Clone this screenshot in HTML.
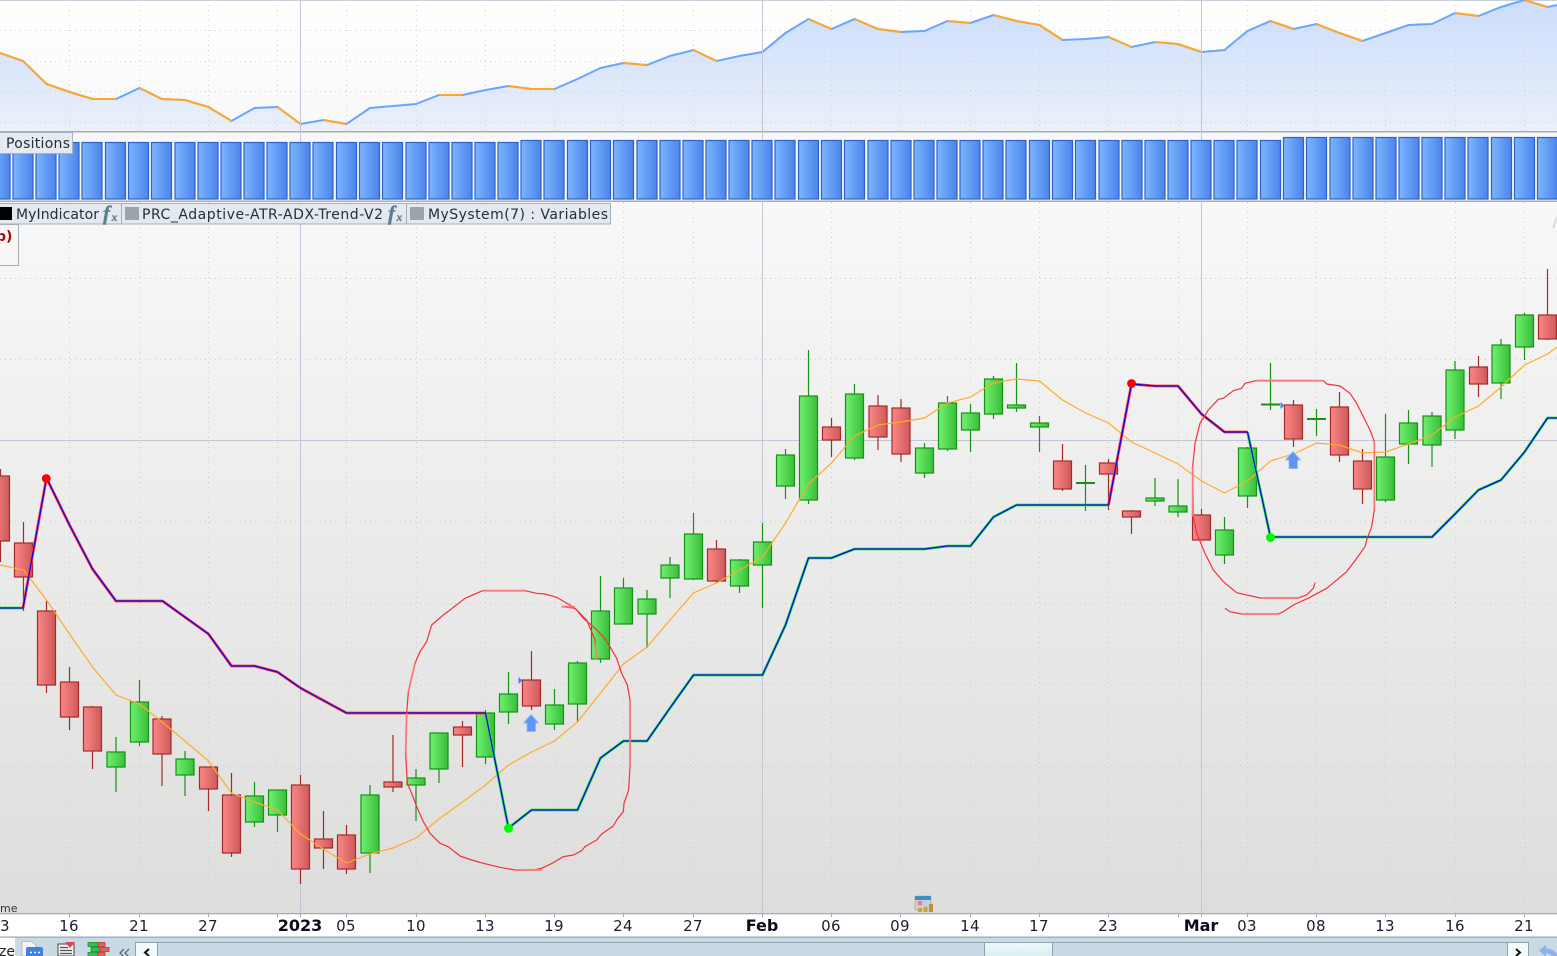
<!DOCTYPE html>
<html><head><meta charset="utf-8"><title>Chart</title>
<style>
html,body{margin:0;padding:0;background:#fff;width:1557px;height:956px;overflow:hidden}
svg{display:block;position:absolute;left:0;top:0}
text{font-family:"DejaVu Sans","Liberation Sans",sans-serif;fill:#1a1a2a}
.ax{font-size:15px;text-anchor:middle;letter-spacing:.3px;fill:#1c1c30}
.axb{font-size:16px;font-weight:bold;text-anchor:middle;fill:#0c0c18}
.lg{font-size:14px;fill:#22303a}
.fx{font-family:"Liberation Serif",serif;font-style:italic;font-weight:bold;fill:#5e7e8c}
.bars rect{width:20px;stroke:#2d62cc;stroke-width:1.2;fill:url(#gb)}
.b1 rect{y:142.5px;height:56.5px}
.b2 rect{y:140.5px;height:58.5px}
.b3 rect{y:137.5px;height:61.5px}
</style></head><body>
<svg width="1557" height="956" viewBox="0 0 1557 956" xmlns="http://www.w3.org/2000/svg">
<defs>
<linearGradient id="gt" x1="0" y1="0" x2="0" y2="1"><stop offset="0" stop-color="#fff"/><stop offset="1" stop-color="#f8f8f8"/></linearGradient>
<linearGradient id="ga" gradientUnits="userSpaceOnUse" x1="0" y1="0" x2="0" y2="131"><stop offset="0" stop-color="#cbddfc"/><stop offset="1" stop-color="#ebf0fa"/></linearGradient>
<linearGradient id="gm" x1="0" y1="0" x2="0" y2="1"><stop offset="0" stop-color="#f8f8f8"/><stop offset="1" stop-color="#dddddc"/></linearGradient>
<linearGradient id="gb" x1="0" y1="0" x2="1" y2="0"><stop offset="0" stop-color="#7db5ff"/><stop offset="1" stop-color="#4b84ea"/></linearGradient>
<linearGradient id="gg" x1="0" y1="0" x2="1" y2="0"><stop offset="0" stop-color="#70f070"/><stop offset="1" stop-color="#3abf3a"/></linearGradient>
<linearGradient id="gr" x1="0" y1="0" x2="1" y2="0"><stop offset="0" stop-color="#fc8686"/><stop offset="1" stop-color="#cd5a5a"/></linearGradient>
<linearGradient id="gth" x1="0" y1="0" x2="0" y2="1"><stop offset="0" stop-color="#eef9fb"/><stop offset="1" stop-color="#d8edf1"/></linearGradient>
</defs>

<!-- top panel -->
<rect x="0" y="0" width="1557" height="131" fill="url(#gt)"/>
<rect x="0" y="0" width="1557" height="1" fill="#c8d0dc"/>
<path d="M0 53L23 61 46.5 84 69.5 92 92.5 99 116 99 139.5 88 162 99 185 100 208.5 107 231.5 121 254.5 108 277.5 107 300.5 124 323.5 120 346.5 124 370 108 393 106 416 104 439 95 462.5 95 485.5 90 508.5 86 531.5 89 554.5 89 577.5 79 600.5 68 623.5 63 647 65 670 56 693.5 50 716.5 61 739.5 56 762.5 52 785.5 33 808.5 19 831.5 29 854.5 19 878 29 901 32 924.5 31 947.5 21 970.5 23 993.5 15 1016.5 21 1039.5 25 1062.5 40 1085.5 39 1108.5 37 1131.5 47 1155 42 1178 44 1201.5 52 1224.5 50 1247.5 31 1270.5 21 1293.5 29 1316.5 24 1339.5 33 1362.5 41 1385.5 33 1408.5 25 1432 24 1455 13 1478.5 16 1501 7 1524.5 0 1547.5 7 1557 5V131H0Z" fill="url(#ga)"/>
<g stroke="#d2d4d9" stroke-width="1" stroke-dasharray="1 4" fill="none">
<path d="M0 30.5H1557M0 61.5H1557M0 91.5H1557M0 122.5H1557"/>
<path d="M69.5 0V131M139.5 0V131M208.5 0V131M277.5 0V131M346.5 0V131M416.5 0V131M485.5 0V131M554.5 0V131M623.5 0V131M693.5 0V131M831.5 0V131M900.5 0V131M970.5 0V131M1039.5 0V131M1108.5 0V131M1178.5 0V131M1247.5 0V131M1316.5 0V131M1385.5 0V131M1455.5 0V131M1524.5 0V131"/>
</g>
<path d="M0 53L23 61 46.5 84 69.5 92 92.5 99 116 99 139.5 88 162 99 185 100 208.5 107 231.5 121 254.5 108 277.5 107 300.5 124 323.5 120 346.5 124 370 108 393 106 416 104 439 95 462.5 95 485.5 90 508.5 86 531.5 89 554.5 89 577.5 79 600.5 68 623.5 63 647 65 670 56 693.5 50 716.5 61 739.5 56 762.5 52 785.5 33 808.5 19 831.5 29 854.5 19 878 29 901 32 924.5 31 947.5 21 970.5 23 993.5 15 1016.5 21 1039.5 25 1062.5 40 1085.5 39 1108.5 37 1131.5 47 1155 42 1178 44 1201.5 52 1224.5 50 1247.5 31 1270.5 21 1293.5 29 1316.5 24 1339.5 33 1362.5 41 1385.5 33 1408.5 25 1432 24 1455 13 1478.5 16 1501 7 1524.5 0 1547.5 7 1557 5" fill="none" stroke="#69a5ff" stroke-width="2"/>
<path d="M0 53L23 61 46.5 84 69.5 92 92.5 99 116 99M139.5 88L162 99 185 100 208.5 107 231.5 121M277.5 107L300.5 124M323.5 120L346.5 124M439 95L462.5 95M508.5 86L531.5 89 554.5 89M623.5 63L647 65M693.5 50L716.5 61M808.5 19L831.5 29M854.5 19L878 29 901 32M947.5 21L970.5 23M993.5 15L1016.5 21 1039.5 25 1062.5 40M1108.5 37L1131.5 47M1155 42L1178 44 1201.5 52M1270.5 21L1293.5 29M1316.5 24L1339.5 33 1362.5 41M1455 13L1478.5 16M1524.5 0L1547.5 7" fill="none" stroke="#ffa726" stroke-width="2"/>
<rect x="0" y="131" width="1557" height="1.5" fill="#a6adb5"/>

<!-- main panel + positions panel backgrounds -->
<rect x="0" y="132.5" width="1557" height="68" fill="#f8f8f8"/>
<rect x="0" y="200.5" width="1557" height="1.5" fill="#a6adb5"/>
<rect x="0" y="202" width="1557" height="711" fill="url(#gm)"/>
<g stroke="#cdcfd4" stroke-width="1" stroke-dasharray="1 4" fill="none">
<path d="M0 278.5H1557M0 359.5H1557M0 521.5H1557M0 603.5H1557M0 684.5H1557M0 765.5H1557M0 847.5H1557"/>
<path d="M69.5 202V913M139.5 202V913M208.5 202V913M277.5 202V913M346.5 202V913M416.5 202V913M485.5 202V913M554.5 202V913M623.5 202V913M693.5 202V913M831.5 202V913M900.5 202V913M970.5 202V913M1039.5 202V913M1108.5 202V913M1178.5 202V913M1247.5 202V913M1316.5 202V913M1385.5 202V913M1455.5 202V913M1524.5 202V913"/>
</g>
<path d="M0 440.5H1557M300.5 0V916M762.5 0V916M1201.5 0V916" stroke="#c2c6d6" stroke-width="1" fill="none"/>
<path d="M1553 228L1557 217" stroke="#dcdcdf" stroke-width="2" fill="none"/>

<!-- position bars -->
<g class="bars b1"><rect x="-10"/><rect x="13"/><rect x="36"/><rect x="59"/><rect x="82"/><rect x="105.5"/><rect x="128.5"/><rect x="151.5"/><rect x="175"/><rect x="198"/><rect x="221"/><rect x="244"/><rect x="267"/><rect x="290"/><rect x="313"/><rect x="336.5"/><rect x="359.5"/><rect x="382.5"/><rect x="406"/><rect x="429"/><rect x="452"/><rect x="475"/><rect x="498"/></g>
<g class="bars b2"><rect x="521"/><rect x="544"/><rect x="567.5"/><rect x="590.5"/><rect x="613.5"/><rect x="637"/><rect x="660"/><rect x="683"/><rect x="706"/><rect x="729"/><rect x="752"/><rect x="775"/><rect x="798.5"/><rect x="821.5"/><rect x="844.5"/><rect x="868"/><rect x="891"/><rect x="914"/><rect x="937"/><rect x="960"/><rect x="983"/><rect x="1006"/><rect x="1029.5"/><rect x="1052.5"/><rect x="1075.5"/><rect x="1099"/><rect x="1122"/><rect x="1145"/><rect x="1168"/><rect x="1191"/><rect x="1214"/><rect x="1237"/><rect x="1260.5"/></g>
<g class="bars b3"><rect x="1283.5"/><rect x="1306.5"/><rect x="1330"/><rect x="1353"/><rect x="1376"/><rect x="1399"/><rect x="1422"/><rect x="1445"/><rect x="1468"/><rect x="1491.5"/><rect x="1514.5"/><rect x="1537.5"/></g>

<!-- red candles -->
<path fill="none" stroke="#a32a2a" stroke-width="1.2" d="M.5 469V562M23.5 522V611M46.5 601V693M69.5 667V730M92.5 706V769M162 716V786M208.5 767V811M231.5 773V857M300.5 775V884M323.5 811V869M346.5 825V874M393 735V792M462.5 721V767M531.5 651V710M716.5 540V583M831.5 418V457M878 395V450M901 399V462M1062.5 444V491M1108.5 459V510M1131.5 510V534M1201.5 509V540M1293.5 400V447M1339.5 392V462M1362.5 449V504M1478.5 356V397M1547.5 269V340"/>
<g fill="url(#gr)" stroke="#a32a2a" stroke-width="1.2">
<rect x="-8.5" y="476" width="18" height="65"/><rect x="14.5" y="543" width="18" height="34"/><rect x="37.5" y="611" width="18" height="74"/><rect x="60.5" y="682" width="18" height="35"/><rect x="83.5" y="707" width="18" height="44"/><rect x="153" y="719" width="18" height="35"/><rect x="199.5" y="767" width="18" height="22"/><rect x="222.5" y="795" width="18" height="58"/><rect x="291.5" y="785" width="18" height="84"/><rect x="314.5" y="839" width="18" height="9"/><rect x="337.5" y="835" width="18" height="34"/><rect x="384" y="782" width="18" height="5"/><rect x="453.5" y="727" width="18" height="8"/><rect x="522.5" y="680" width="18" height="26"/><rect x="707.5" y="549" width="18" height="32"/><rect x="822.5" y="427" width="18" height="13"/><rect x="869" y="406" width="18" height="31"/><rect x="892" y="408" width="18" height="46"/><rect x="1053.5" y="461" width="18" height="28"/><rect x="1099.5" y="463" width="18" height="11"/><rect x="1122.5" y="511" width="18" height="6"/><rect x="1192.5" y="515" width="18" height="25"/><rect x="1284.5" y="405" width="18" height="34"/><rect x="1330.5" y="407" width="18" height="48"/><rect x="1353.5" y="461" width="18" height="28"/><rect x="1469.5" y="367" width="18" height="17"/><rect x="1538.5" y="315" width="18" height="24"/>
</g>
<!-- green candles -->
<path fill="none" stroke="#149214" stroke-width="1.2" d="M116 737V792M139.5 680V746M185 751V796M254.5 782V827M277.5 790V832M370 785V873M416 769V821M439 733V783M485.5 710V764M508.5 672V724M554.5 689V730M577.5 661V722M600.5 576V663M623.5 578V624M647 590V648M670 557V598M693.5 513V580M739.5 559V593M762.5 523V608M785.5 449V499M808.5 350V504M854.5 384V460M924.5 443V478M947.5 396V451M970.5 404V452M993.5 376V419M1016.5 363V412M1039.5 416V452M1085.5 465V511M1155 478V506M1178 479V517M1224.5 517V564M1247.5 447V508M1270.5 363V410M1316.5 409V436M1385.5 414V502M1408.5 410V464M1432 412V467M1455 361V439M1501 339V399M1524.5 313V360"/>
<path fill="none" stroke="#149214" stroke-width="2" d="M1076 483H1095M1261 404.500H1280M1307 419H1326"/>
<g fill="url(#gg)" stroke="#149214" stroke-width="1.2">
<rect x="107" y="752" width="18" height="15"/><rect x="130.500" y="702" width="18" height="40"/><rect x="176" y="759" width="18" height="16"/><rect x="245.500" y="796" width="18" height="26"/><rect x="268.500" y="790" width="18" height="25"/><rect x="361" y="795" width="18" height="58"/><rect x="407" y="778" width="18" height="7"/><rect x="430" y="733" width="18" height="36"/><rect x="476.500" y="713" width="18" height="44"/><rect x="499.500" y="694" width="18" height="18"/><rect x="545.500" y="705" width="18" height="19"/><rect x="568.500" y="663" width="18" height="41"/><rect x="591.500" y="611" width="18" height="48"/><rect x="614.500" y="588" width="18" height="36"/><rect x="638" y="599" width="18" height="15"/><rect x="661" y="565" width="18" height="13"/><rect x="684.500" y="534" width="18" height="45"/><rect x="730.500" y="560" width="18" height="26"/><rect x="753.500" y="542" width="18" height="23"/><rect x="776.500" y="455" width="18" height="31"/><rect x="799.500" y="396" width="18" height="104"/><rect x="845.500" y="394" width="18" height="64"/><rect x="915.500" y="448" width="18" height="25"/><rect x="938.500" y="403" width="18" height="46"/><rect x="961.500" y="413" width="18" height="17"/><rect x="984.500" y="379" width="18" height="35"/><rect x="1007.500" y="405" width="18" height="3"/><rect x="1030.500" y="423" width="18" height="4"/><rect x="1146" y="498" width="18" height="3"/><rect x="1169" y="506" width="18" height="6"/><rect x="1215.500" y="530" width="18" height="25"/><rect x="1238.500" y="448" width="18" height="48"/><rect x="1376.500" y="457" width="18" height="43"/><rect x="1399.500" y="423" width="18" height="21"/><rect x="1423" y="416" width="18" height="29"/><rect x="1446" y="370" width="18" height="60"/><rect x="1492" y="345" width="18" height="38"/><rect x="1515.500" y="315" width="18" height="32"/>
</g>

<!-- moving average -->
<path fill="none" stroke="#ffab2a" stroke-width="1.2" d="M0 565L23.500 570 46.500 600 69.500 634 92.500 667 116 695 139.500 704 162 722 185 741 208.500 761 231.500 793 254.500 802 277.500 810 300.500 834 323.500 849 346.500 863 370 854 393 848 416 838 439 819 462.500 802 485.500 785 508.500 765 531.500 752 554.500 741 577.500 722 600.500 693 623.500 664 647 647 670 620 693.500 593 716.500 583 739.500 570 762.500 557 785.500 523 808.500 484 831.500 463 854.500 436 878 425 901 422 924.500 418 947.500 403 970.500 397 993.500 383 1016.500 379 1039.500 381 1062.500 400 1085.500 413 1108.500 423 1131.500 442 1155 453 1178 464 1201.500 481 1224.500 493 1247.500 481 1270.500 461 1293.500 454 1316.500 443 1339.500 445 1362.500 453 1385.500 452 1408.500 444 1432 435 1455 417 1478.500 406 1501 387 1524.500 365 1547.500 354 1557 347"/>

<!-- trend halos and core -->
<g fill="none" stroke-linejoin="round">
<g stroke="#2ee050" stroke-width="2.800">
<path d="M0 608H23"/>
<path d="M485.500 713L508.500 828 531.500 810 577.500 810 600.500 758 623.500 741 647 741 670 708 693.500 675 762.500 675 785.500 625 808.500 558 831.500 558 854.500 549 924.500 549 947.500 546 970.500 546 993.500 517 1016.500 505 1108.500 505"/>
<path d="M1247.500 432L1270.500 537 1293.500 537 1432 537 1455 514 1478.500 490 1501 480 1524.500 452 1547.500 418 1557 418"/>
</g>
<g stroke="#ff3a4e" stroke-width="2.800">
<path d="M23 608L46.500 478 69.500 525 92.500 569 116 601 162.500 601 208.500 634 231.500 666 254.500 666 277.500 672 300.500 688 346.500 713 485.500 713"/>
<path d="M1108.500 505L1131.500 384 1155 386 1178 386 1201.500 414 1224.500 432 1247.500 432"/>
</g>
<path stroke="#0808d8" stroke-width="1.250" d="M0 608H23L46.500 478 69.500 525 92.500 569 116 601 162.500 601 208.500 634 231.500 666 254.500 666 277.500 672 300.500 688 346.500 713 485.500 713 508.500 828 531.500 810 577.500 810 600.500 758 623.500 741 647 741 670 708 693.500 675 762.500 675 785.500 625 808.500 558 831.500 558 854.500 549 924.500 549 947.500 546 970.500 546 993.500 517 1016.500 505 1108.500 505 1131.500 384 1155 386 1178 386 1201.500 414 1224.500 432 1247.500 432 1270.500 537 1293.500 537 1432 537 1455 514 1478.500 490 1501 480 1524.500 452 1547.500 418 1557 418"/>
</g>
<circle cx="46.300" cy="478.500" r="4.400" fill="#ff0000"/>
<circle cx="1131.500" cy="383.500" r="4.400" fill="#ff0000"/>
<circle cx="508.500" cy="828.300" r="4.500" fill="#00f800"/>
<circle cx="1270.500" cy="537.500" r="4.500" fill="#00f800"/>

<!-- entry arrows and markers -->
<g fill="#5f96f5" stroke="#8fb6f5" stroke-width=".8">
<path d="M531 714.500L538.500 723H535.500V731.500H527V723H523.500Z"/>
<path d="M1293 451.500L1300.500 460H1297.500V468.500H1289V460H1285.500Z"/>
</g>
<path d="M518.500 677L522.500 680.500 518.500 684Z" fill="#4a82e8"/>
<path d="M1280.500 402L1284.500 405.500 1280.500 409Z" fill="#4a82e8"/>

<!-- hand drawn circles -->
<g transform="translate(400 580) scale(.33333)" fill="none" stroke-linejoin="round">
<path stroke="#f5303a" stroke-width="3.600" d="M248 32L375 32 410 40 435 42 470 52 510 75 530 90 550 115 580 140 610 170 630 200 650 235 665 280 682 315 690 360 690 560 686 630 672 670 670 695 650 720 640 738 605 762 590 780 555 800 545 812 520 825 490 830 460 848 425 865 400 870 345 870 300 862 250 850 215 840 180 828 145 800 120 790 90 760 70 725 50 680 35 640 22 610 17 520 20 400 25 335 45 250 60 215 80 185 95 135 130 105 150 90 195 55 248 32"/>
<path stroke="#f5303a" stroke-width="3.600" d="M485 80L525 85 560 120 585 180 589 238"/>
<path stroke="#f87a7a" stroke-width="5.400" d="M248 32H375M690 360V560M345 870H425M17 520L20 400M25 335L45 250M485 80H525M586 190L589 238"/>
</g>
<g transform="translate(1180 360) scale(.33333)" fill="none" stroke-linejoin="round">
<path stroke="#f5303a" stroke-width="3.600" d="M228 62L430 62 440 72 480 78 510 100 530 130 555 180 570 210 583 245 583 450 575 500 560 540 555 560 530 595 500 635 440 685 390 712 340 735 310 755 295 762 185 762 150 755 135 745"/>
<path stroke="#f5303a" stroke-width="3.600" d="M405 668L400 685 380 705 355 714 240 714 170 698 130 665 100 630 75 580 50 520 40 470 38 320 45 250 60 190 85 150 115 118 130 115 160 92 185 85 195 70 228 62"/>
<path stroke="#f87a7a" stroke-width="5.400" d="M228 62H430M583 245V450M185 762H295M240 714H355M38 320V470"/>
</g>

<!-- positions tab -->
<rect x="-2" y="132.500" width="74.500" height="21" fill="#e4eaef" stroke="#a9b4bd"/>
<text class="lg" x="6" y="148" textLength="64">Positions</text>

<!-- legend -->
<rect x="-2" y="203.500" width="612.500" height="20.500" fill="#e3e9ee" stroke="#a3b0ba"/>
<path d="M121.500 204V224M406.500 204V224" stroke="#a3b0ba"/>
<rect x="0" y="207" width="12" height="13" fill="#000"/>
<rect x="125" y="207" width="14" height="13" fill="#9aa4aa"/>
<rect x="410" y="207" width="14" height="13" fill="#9aa4aa"/>
<text class="lg" x="16" y="219" textLength="83">MyIndicator</text>
<text class="lg" x="142" y="219" textLength="241">PRC_Adaptive-ATR-ADX-Trend-V2</text>
<text class="lg" x="428" y="219" textLength="180">MySystem(7) : Variables</text>
<text class="fx" x="103" y="220" font-size="21" stroke="#5e7e8c" stroke-width=".4">f</text><text class="fx" x="111.500" y="221" font-size="11.500" stroke="#5e7e8c" stroke-width=".3">x</text>
<text class="fx" x="388" y="220" font-size="21" stroke="#5e7e8c" stroke-width=".4">f</text><text class="fx" x="396.500" y="221" font-size="11.500" stroke="#5e7e8c" stroke-width=".3">x</text>

<!-- little box left -->
<rect x="-2" y="224.500" width="20.500" height="41" fill="#f8f8f8" stroke="#a3b0ba"/>
<text x="-4" y="241" font-size="14" font-weight="bold" style="fill:#a50e0e">p)</text>

<text x="0" y="912" font-size="11" style="fill:#333">me</text>

<!-- calendar icon -->
<g>
<rect x="915" y="896" width="16" height="14" rx="1" fill="#c9ced3" stroke="#9aa0a6" stroke-width=".6"/>
<rect x="915" y="896" width="16" height="4" fill="#3e8ec4"/>
<rect x="918" y="901" width="4" height="4" fill="#f27a7a"/>
<rect x="918" y="908" width="4" height="4" fill="#c9a53a"/>
<rect x="923.500" y="907" width="4" height="5" fill="#c9a53a"/>
<rect x="929" y="904" width="4" height="8" fill="#b9962e"/>
</g>

<!-- time axis -->
<rect x="0" y="913" width="1557" height="24" fill="#fff"/>
<rect x="0" y="913" width="1557" height="1.300" fill="#a6adb1"/>
<path d="M69.500 914V917M139.500 914V917M208.500 914V917M277.500 914V917M300.500 914V917M346.500 914V917M416.500 914V917M485.500 914V917M554.500 914V917M623.500 914V917M693.500 914V917M762.500 914V917M831.500 914V917M900.500 914V917M970.500 914V917M1039.500 914V917M1108.500 914V917M1178.500 914V917M1201.500 914V917M1247.500 914V917M1316.500 914V917M1385.500 914V917M1455.500 914V917M1524.500 914V917" stroke="#a6adb1"/>
<text class="ax" x="0" y="931">03</text>
<text class="ax" x="69" y="931">16</text>
<text class="ax" x="139" y="931">21</text>
<text class="ax" x="208" y="931">27</text>
<text class="axb" x="300" y="931">2023</text>
<text class="ax" x="346" y="931">05</text>
<text class="ax" x="416" y="931">10</text>
<text class="ax" x="485" y="931">13</text>
<text class="ax" x="554" y="931">19</text>
<text class="ax" x="623" y="931">24</text>
<text class="ax" x="693" y="931">27</text>
<text class="axb" x="762" y="931">Feb</text>
<text class="ax" x="831" y="931">06</text>
<text class="ax" x="900" y="931">09</text>
<text class="ax" x="970" y="931">14</text>
<text class="ax" x="1039" y="931">17</text>
<text class="ax" x="1108" y="931">23</text>
<text class="axb" x="1201" y="931">Mar</text>
<text class="ax" x="1247" y="931">03</text>
<text class="ax" x="1316" y="931">08</text>
<text class="ax" x="1385" y="931">13</text>
<text class="ax" x="1455" y="931">16</text>
<text class="ax" x="1524" y="931">21</text>

<!-- bottom toolbar -->
<rect x="0" y="937" width="1557" height="19" fill="#c9dae5"/>
<rect x="0" y="936.500" width="1557" height="1.300" fill="#9fa9b0"/>
<rect x="-1" y="937.800" width="16" height="20" fill="#fff"/>
<text x="-1" y="956" font-size="14" style="fill:#222">ze</text>
<!-- doc icon -->
<path d="M22 941.500H32L36 945.500V956H22Z" fill="#f3f5f7" stroke="#b4bcc4"/>
<rect x="26" y="947" width="17" height="11" rx="2" fill="#3f7fe6"/>
<path d="M30 952.500h2M34 952.500h2M38 952.500h2" stroke="#fff" stroke-width="1.500"/>
<!-- list icon -->
<path d="M58 944H74V956H58Z" fill="#f2f2f2" stroke="#444"/>
<path d="M60 947.500H68M60 950.500H72M60 953.500H72" stroke="#555" stroke-width="1.200"/>
<path d="M65 942H75L70 948Z" fill="#e0464f"/>
<!-- green/red bars icon -->
<g stroke-width=".8">
<rect x="88" y="942.500" width="10" height="4" fill="#2fc24e" stroke="#168a30"/>
<rect x="91" y="947.500" width="9" height="4" fill="#2fc24e" stroke="#168a30"/>
<rect x="88" y="952.500" width="10" height="4" fill="#2fc24e" stroke="#168a30"/>
<rect x="98" y="942.500" width="7" height="4" fill="#e0625c" stroke="#b03a36"/>
<rect x="100" y="947.500" width="9" height="4" fill="#e0625c" stroke="#b03a36"/>
<rect x="98" y="952.500" width="7" height="4" fill="#e0625c" stroke="#b03a36"/>
</g>
<path d="M124 949L120 953 124 957M129 949L125 953 129 957" stroke="#5a6a74" stroke-width="1.300" fill="none"/>
<!-- scrollbar -->
<path d="M135 942.500H1529" stroke="#90a4b0" fill="none"/>
<rect x="135.500" y="942.500" width="22" height="15" fill="#f2fafb" stroke="#8fa1ac"/>
<path d="M149 949L145 952.500 149 956" stroke="#111" stroke-width="2" fill="none"/>
<rect x="984.500" y="942.500" width="68" height="15" fill="url(#gth)" stroke="#8fa1ac"/>
<rect x="1507.500" y="942.500" width="21" height="15" fill="#f2fafb" stroke="#8fa1ac"/>
<path d="M1516 949L1520 952.500 1516 956" stroke="#111" stroke-width="2" fill="none"/>
<!-- undo arrow -->
<path d="M1539 950.500L1546 944.500V948.500C1552 948.500 1555 951 1557 954V958H1553C1552 955 1549 953.500 1546 953.500V957Z" fill="#8ab4ef"/>
</svg>
</body></html>
